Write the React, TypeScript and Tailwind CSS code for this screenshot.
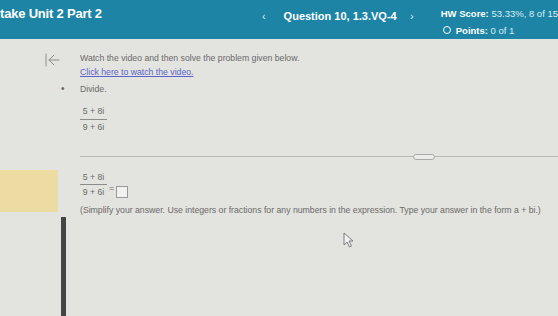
import React from 'react';

function Fraction({ top, bottom }: { top: string; bottom: string }) {
  return (
    <div className="inline-flex flex-col items-center text-[8.7px] leading-none text-[#6b6b6b]">
      <span className="px-[2px] pb-[3px]">{top}</span>
      <span className="w-[27px] border-t border-[#8c8c8c]" />
      <span className="px-[2px] pt-[3px]">{bottom}</span>
    </div>
  );
}

export default function App() {
  return (
    <div className="relative w-[558px] h-[316px] overflow-hidden bg-[#e3e3df] font-['Liberation_Sans',Arial,sans-serif]">
      {/* Top bar */}
      <header className="flex h-[39px] items-start bg-[#1d84a5] text-white">
        <div className="w-[265px] pt-[7px] text-[13px] font-bold leading-none tracking-[-0.2px]">take Unit 2 Part 2</div>
        <div className="w-[22px] pt-[11px] text-[11px] leading-none text-[#d8eef5]">‹</div>
        <div className="w-[128px] pt-[11px] text-[11px] font-bold leading-none">Question 10, 1.3.VQ-4</div>
        <div className="w-[31px] pt-[11px] text-[11px] leading-none text-[#d8eef5]">›</div>
        <div className="flex flex-col gap-[7px] pt-[9px] text-[9.5px] leading-none whitespace-nowrap">
          <div>
            <span className="font-bold">HW Score:</span> <span className="text-[#d8eef5]">53.33%, 8 of 15</span>
          </div>
          <div className="flex items-center gap-[5px] pl-[2px]">
            <span className="h-[8px] w-[8px] rounded-full border-[1.5px] border-white" />
            <span>
              <span className="font-bold">Points:</span> <span className="text-[#d8eef5]">0 of 1</span>
            </span>
          </div>
        </div>
      </header>

      {/* Body */}
      <div className="flex h-[277px]">
        <div className="flex w-[60px] flex-col">
          <svg className="ml-[44px] mt-[13px]" width="16" height="16" viewBox="0 0 16 16" fill="none" stroke="#8d8d8d" strokeWidth="1" strokeLinecap="round">
            <path d="M2 2v12" />
            <path d="M10 3 5 8l5 5" />
            <path d="M5 8h10" />
          </svg>
          <div className="mt-[102px] h-[42px] w-[58px] bg-[#ecdca2]" />
        </div>

        <div className="flex w-[20px] flex-col">
          <div className="ml-[1px] mt-[45px] text-[10px] leading-none text-[#666]">•</div>
          <div className="ml-[1px] mt-[123px] w-[5px] flex-1 bg-[#454545]" />
        </div>

        <div className="flex flex-1 flex-col text-[8.7px] leading-none text-[#6a6a6a]">
          <p className="mt-[15px] whitespace-nowrap">Watch the video and then solve the problem given below.</p>
          <p className="mt-[5px] text-[#5b63c9] underline">Click here to watch the video.</p>
          <p className="mt-[9px]">Divide.</p>
          <div className="mt-[13px]">
            <Fraction top="5 + 8i" bottom="9 + 6i" />
          </div>

          {/* Divider with handle */}
          <div className="mt-[22px] flex h-[6px] items-center">
            <div className="h-px w-[333px] bg-[#b9b9b6]" />
            <div className="h-[6px] w-[22px] rounded-full border border-[#a9a9a6] bg-[#ececea]" />
            <div className="h-px flex-1 bg-[#b9b9b6]" />
          </div>

          <div className="mt-[13px] flex items-start gap-[2px]">
            <Fraction top="5 + 8i" bottom="9 + 6i" />
            <span className="mt-[11px]">=</span>
            <span className="mt-[13px] h-[12px] w-[12px] border border-[#9a9a9a] bg-[#f1f1ef]" />
          </div>
          <p className="mt-[8px] whitespace-nowrap">
            (Simplify your answer. Use integers or fractions for any numbers in the expression. Type your answer in the form a + bi.)
          </p>
        </div>
      </div>

      {/* Mouse pointer */}
      <svg className="absolute left-[343px] top-[232px]" width="11" height="16" viewBox="0 0 11 16" fill="#f2f2f2" stroke="#7a7a7a" strokeWidth="1">
        <path d="M1 1v12l3-3 2.5 5 2-1-2.5-5H10z" />
      </svg>
    </div>
  );
}
